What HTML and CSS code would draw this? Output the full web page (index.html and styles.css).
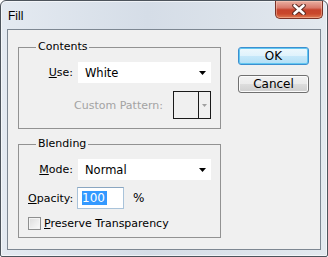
FILE: index.html
```html
<!DOCTYPE html>
<html lang="en">

<head>
    <meta charset="UTF-8">
    <title>Fill</title>
    <link rel="stylesheet" href="styles.css">
</head>

<body>
    <div class="window">
        <div class="titlebar">
            <span class="title">Fill</span>
            <div class="close">
                <svg width="14" height="11" viewBox="0 0 14 11">
                    <path d="M2.5 1.5 L11.5 9.5 M11.5 1.5 L2.5 9.5" stroke="#5a2a22" stroke-width="4.6" stroke-linecap="round" />
                    <path d="M2.5 1.5 L11.5 9.5 M11.5 1.5 L2.5 9.5" stroke="#ffffff" stroke-width="2.6" stroke-linecap="round" />
                </svg>
            </div>
        </div>
        <div class="client">
            <div class="groups">
                <div class="group contents">
                    <span class="legend">Contents</span>
                    <div class="row">
                        <span class="lbl"><u>U</u>se:</span>
                        <div class="select">
                            <span>White</span>
                            <svg class="arrow" width="7" height="4" viewBox="0 0 7 4"><path d="M0 0 H7 L3.5 4 Z" fill="#000" /></svg>
                        </div>
                    </div>
                    <div class="row pattern-row">
                        <span class="lbl dim">Custom Pattern:</span>
                        <div class="pattern">
                            <div class="swatch"></div>
                            <div class="pattern-arrow">
                                <svg width="5" height="3" viewBox="0 0 5 3"><path d="M0 0 H5 L2.5 3 Z" fill="#a0a0a0" /></svg>
                            </div>
                        </div>
                    </div>
                </div>
                <div class="group blending">
                    <span class="legend">Blending</span>
                    <div class="row">
                        <span class="lbl"><u>M</u>ode:</span>
                        <div class="select">
                            <span>Normal</span>
                            <svg class="arrow" width="7" height="4" viewBox="0 0 7 4"><path d="M0 0 H7 L3.5 4 Z" fill="#000" /></svg>
                        </div>
                    </div>
                    <div class="row opacity-row">
                        <span class="lbl"><u>O</u>pacity:</span>
                        <div class="input"><span class="sel">100</span></div>
                        <span class="unit">%</span>
                    </div>
                    <div class="row check-row">
                        <div class="check"></div>
                        <span><u>P</u>reserve Transparency</span>
                    </div>
                </div>
            </div>
            <div class="buttons">
                <button class="btn default">OK</button>
                <button class="btn">Cancel</button>
            </div>
        </div>
    </div>
</body>

</html>
```

FILE: styles.css
```css
* {
    box-sizing: border-box;
}

body {
    margin: 0;
    font-family: "DejaVu Sans", sans-serif;
    font-size: 11px;
    color: #000;
}

.window {
    width: 328px;
    height: 257px;
    border: 1px solid #4d545c;
    border-radius: 6px 6px 2px 2px;
    background: linear-gradient(90deg, #e4eaf1, #d5dde7 45%, #dbe2ea 70%, #e3e9ef);
    box-shadow: inset 0 0 0 1px rgba(255, 255, 255, 0.6);
    padding: 0 6px 6px 6px;
}

.titlebar {
    height: 28px;
    display: flex;
    justify-content: space-between;
    align-items: flex-start;
}

.title {
    font-family: "Liberation Sans", sans-serif;
    font-size: 12px;
    margin-top: 8px;
    margin-left: 1px;
}

.close {
    width: 48px;
    height: 18px;
    margin-right: -2px;
    border: 1px solid #7a3226;
    border-top: none;
    border-radius: 0 0 5px 5px;
    background: linear-gradient(#eab0a2, #d8796a 40%, #c6432c 52%, #c9472b 75%, #de7a52);
    box-shadow: inset 0 0 0 1px rgba(255, 210, 190, 0.45);
    display: flex;
    justify-content: center;
    align-items: center;
}

.client {
    height: 221px;
    border: 1px solid #7d8792;
    background: #f0f0f0;
    display: flex;
    padding: 17px 0 0 10px;
}

.groups {
    width: 203px;
    display: flex;
    flex-direction: column;
    gap: 15px;
}

.group {
    position: relative;
    border: 1px solid #929292;
    padding: 14px 9px 0 9px;
    display: flex;
    flex-direction: column;
}

.contents {
    height: 82px;
    gap: 8px;
}

.blending {
    height: 94px;
}

.legend {
    position: absolute;
    top: -8px;
    left: 17px;
    padding: 0 2px;
    background: #f0f0f0;
    line-height: 14px;
}

.row {
    display: flex;
    align-items: center;
}

.lbl {
    width: 45px;
    text-align: right;
    margin-right: 5px;
    white-space: nowrap;
}

.lbl.dim {
    width: auto;
    color: #a3a3a3;
    margin-right: 10px;
}

.select {
    width: 133px;
    height: 21px;
    background: #fff;
    display: flex;
    align-items: center;
    justify-content: space-between;
    padding: 0 5px 0 7px;
    font-size: 11.5px;
}

.pattern-row {
    justify-content: flex-end;
}

.pattern {
    width: 38px;
    height: 28px;
    border: 1px solid #1a1a1a;
    display: flex;
}

.swatch {
    width: 25px;
    border-right: 1px solid #1a1a1a;
}

.pattern-arrow {
    flex: 1;
    display: flex;
    justify-content: center;
    align-items: center;
}

.opacity-row {
    margin-top: 7px;
}

.input {
    width: 47px;
    height: 22px;
    margin-left: -1px;
    background: #fff;
    border: 1px solid #a9c3da;
    border-top-color: #8aa6c1;
    padding: 0 0 0 4px;
    display: flex;
    align-items: center;
    font-size: 12px;
}

.sel {
    background: #3399ff;
    color: #fff;
    line-height: 14px;
    padding-right: 2px;
}

.unit {
    margin-left: 9px;
    font-size: 12px;
}

.check-row {
    margin-top: 8px;
    gap: 3px;
}

.check {
    width: 13px;
    height: 13px;
    border: 1px solid #8e8f8f;
    background: linear-gradient(135deg, #dcdcdc, #fbfbfb);
    box-shadow: inset 0 0 0 1px #f4f4f4;
}

.buttons {
    width: 71px;
    margin-left: 17px;
    display: flex;
    flex-direction: column;
    gap: 10px;
}

.btn {
    height: 18px;
    padding: 0;
    font-family: "DejaVu Sans", sans-serif;
    font-size: 12px;
    color: #000;
    border: 1px solid #707070;
    border-radius: 3px;
    background: linear-gradient(#f2f2f2, #ebebeb 50%, #dddddd 51%, #cfcfcf);
    box-shadow: inset 0 0 0 1px #fbfbfb;
}

.btn.default {
    border-color: #3c8fd0;
    background: linear-gradient(#eef8fd, #dff2fc 50%, #c6e8fa 51%, #b3dff6);
    box-shadow: inset 0 0 0 1px #63c7f0;
}
```
